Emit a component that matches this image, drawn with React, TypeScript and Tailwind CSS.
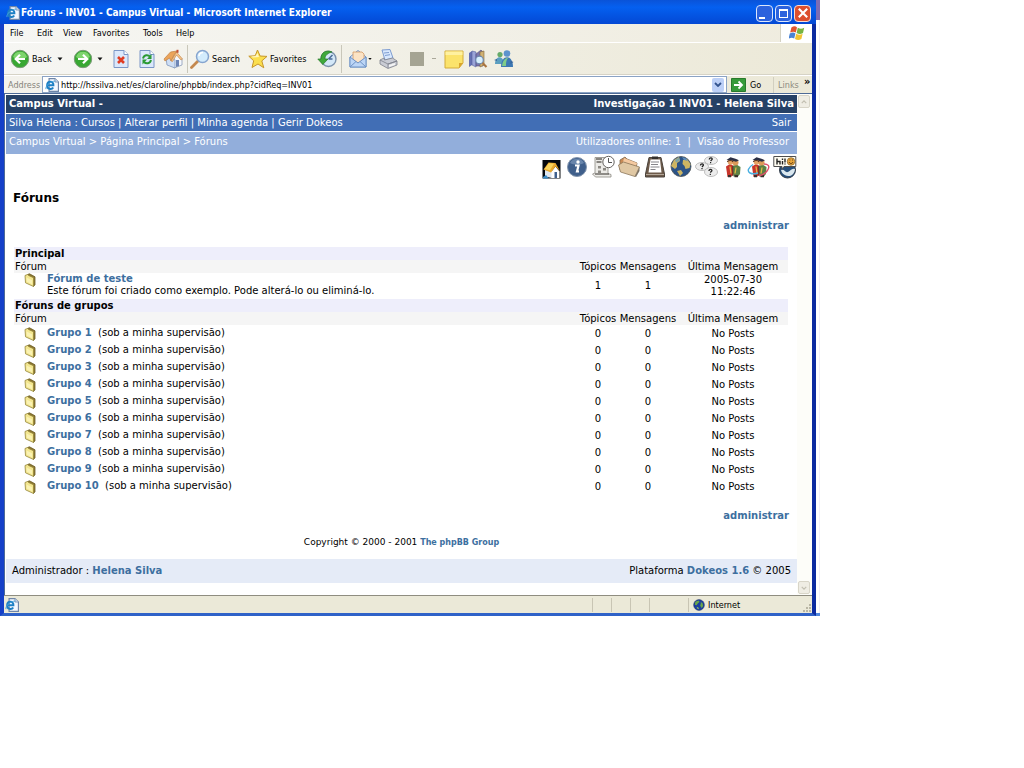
import React from "react";

type P = { children?: React.ReactNode };

const Svg = ({ children, box = "0 0 20 20", cls = "h-5 w-5" }: P & { box?: string; cls?: string }) => (
  <svg viewBox={box} className={`block shrink-0 ${cls}`} aria-hidden="true">
    {children}
  </svg>
);

const PageIcon = ({ cls = "h-3 w-3" }: { cls?: string }) => (
  <Svg box="0 0 12 12" cls={cls}>
    <path d="M3.500 .5h5l3 3v8h-8z" fill="#f4f8ff" stroke="#6f86a8" />
    <path d="M8.500 .5v3h3" fill="#c8d6ea" stroke="#6f86a8" strokeWidth=".6" />
    <path d="M2 6.200h5.200c.3-4-5.200-4-5.400 0-.2 3.600 4 4 5.200 1.900" fill="none" stroke="#1c7fc4" strokeWidth="1.700" />
    <path d="M.8 9.500C0 7 5 2.500 8.800 2.600" fill="none" stroke="#49a4dd" strokeWidth=".8" />
  </Svg>
);

const BackIcon = ({ flip = false }: { flip?: boolean }) => (
  <Svg cls={flip ? "h-5 w-5 -scale-x-100" : "h-5 w-5"}>
    <circle cx="10" cy="10" r="8.700" fill="#38a832" stroke="#7c9a78" />
    <path d="M3 8a7.300 7.300 0 0 1 14 0c-4 3-10 3-14 0" fill="#7ed46d" />
    <path d="M15 10H6m4-4.300L5.700 10l4.300 4.300" fill="none" stroke="#fff" strokeWidth="2.200" />
  </Svg>
);

const Sheet = ({ children }: P) => (
  <Svg box="0 0 16 19" cls="h-5 w-4">
    <path d="M1 1h10l4 4v13H1z" fill="#dbe8fb" stroke="#7b96c6" />
    <path d="M11 1v4h4" fill="#fff" stroke="#7b96c6" />
    {children}
  </Svg>
);

const HomeIcon = () => (
  <Svg>
    <path d="M9 9l5-4 5 5v6l-8 3z" fill="#f4f7fc" stroke="#8a9ab8" strokeWidth=".8" />
    <path d="M3 9l5-4 4 6v8l-8-3z" fill="#cfdff5" stroke="#8097bd" strokeWidth=".8" />
    <path d="M1 10l6.500-7L14 2l-3 4-3 6-1.500-3L2 12z" fill="#eba45a" stroke="#c08040" strokeWidth=".7" />
    <path d="M8 12l5.500-9L19.500 10l-1.500 1-4.500-5-4 6.500z" fill="#f6c58d" stroke="#c08040" strokeWidth=".6" />
    <path d="M13 11h3v6l-3 1z" fill="#6e86b5" />
    <path d="M13.500 .8h2v3h-2z" fill="#c44f30" />
  </Svg>
);

const SearchIcon = () => (
  <Svg>
    <path d="M1.500 18.500L8 12" stroke="#c4884e" strokeWidth="2.800" strokeLinecap="round" />
    <circle cx="12.500" cy="7.500" r="6" fill="#d3ecfc" stroke="#86a5cf" strokeWidth="1.500" />
    <path d="M9 7a4 4 0 0 1 4-3.500" fill="none" stroke="#fff" strokeWidth="1.600" />
  </Svg>
);

const StarIcon = () => (
  <Svg>
    <path d="M9.500 1l2.600 6 6.900.400-5.200 4.500 2 6.900L10 15l-6 3.500 1.700-6.700L.8 7.200l6.400-.4z" fill="#fbdf4e" stroke="#c6962a" />
    <path d="M9.500 4l1.500 4-6 .5-2-1 4.500-.5z" fill="#fff6bd" />
  </Svg>
);

const HistoryIcon = () => (
  <Svg>
    <circle cx="11.500" cy="10" r="7.500" fill="#d4e8f8" stroke="#7c92ac" strokeWidth="1.400" />
    <path d="M11.500 10l4-4m-4 4h4" stroke="#4a6b96" strokeWidth="1.500" fill="none" />
    <path d="M15 3C9 0 3.500 4 4 10H.8l5 5.500L11 10H8C8 6 11 4 15 3z" fill="#3fa93b" stroke="#27792a" strokeWidth=".7" />
  </Svg>
);

const MailIcon = () => (
  <Svg>
    <path d="M2 8l8-6.500L18 8v10H2z" fill="#dceafb" stroke="#6f93c6" />
    <path d="M5 3h9l2 2v6l-6 3-5-3z" fill="#fbe3c5" stroke="#d59b62" strokeWidth=".8" />
    <path d="M2 8l8 6 8-6v10H2z" fill="#bcd6f6" stroke="#6f93c6" />
    <path d="M2 18l6-5.500M18 18l-6-5.500" stroke="#6f93c6" />
  </Svg>
);

const PrintIcon = () => (
  <Svg>
    <path d="M4 1l8-.5L15 9l-8 2z" fill="#d8e8fd" stroke="#7d9cd0" />
    <path d="M6 4l5-.5M7 6.500l5-.8" stroke="#7d9cd0" />
    <path d="M2 11l4-2 .5 2 8-2 4.500 3v4l-9 3.500L2 15z" fill="#c9ccd4" stroke="#7d818c" strokeWidth=".8" />
    <path d="M2 11l8 4 9-3-9 3v4" fill="none" stroke="#7d818c" strokeWidth=".8" />
    <path d="M11 16l6-2v2l-6 2z" fill="#f5f5f5" />
  </Svg>
);

const NoteIcon = () => (
  <Svg>
    <path d="M1 2h18v12l-4 5H1z" fill="#fbe36b" stroke="#d3ac3a" />
    <path d="M1.500 2.500h17V6h-17z" fill="#fff1a0" />
    <path d="M19 14h-4v5z" fill="#d9a52d" />
  </Svg>
);

const ResearchIcon = () => (
  <Svg>
    <path d="M1 4l3-2v14l-3 2z" fill="#6470b2" />
    <path d="M4 2l4 1v15l-4-2z" fill="#9aa4d8" stroke="#545f9d" strokeWidth=".6" />
    <path d="M8 5l5-4 2 2v14H8z" fill="#7c76ab" stroke="#4f4b7c" strokeWidth=".6" />
    <path d="M12 3l4-1v14l-4 2z" fill="#d1b173" stroke="#826438" strokeWidth=".6" />
    <circle cx="11.500" cy="11" r="3.800" fill="#d7effd" stroke="#6b86ae" strokeWidth="1.200" />
    <path d="M14.500 14l4 4" stroke="#a97440" strokeWidth="2.200" />
  </Svg>
);

const MessengerIcon = () => (
  <Svg>
    <circle cx="6" cy="5.500" r="2.600" fill="#66ab6a" />
    <path d="M1 15c0-9 9-9 9 0z" fill="#5a9ec0" />
    <circle cx="13" cy="4.500" r="3.300" fill="#5d93cd" />
    <path d="M7 18c0-13 12-13 12 0z" fill="#3c78b4" />
    <path d="M8 17c1-7 4-8 6-8-2 2-2 5-2 8z" fill="#7fcb88" />
    <path d="M0 11l3-1v2zM19.500 13l-3-1v3z" fill="#36649c" />
  </Svg>
);

const Globe = ({ cls = "h-3 w-3" }: { cls?: string }) => (
  <Svg cls={cls}>
    <circle cx="10" cy="10" r="9" fill="#1c3fa0" stroke="#1c2b58" strokeWidth=".8" />
    <path d="M4 4.500l5-2 2 2-3 3-2 3-3-1zM13 5l3 2 1 5-3 3-2-4 1-3z" fill="#6aa748" />
    <path d="M6 13l3 1 1 3-3-1z" fill="#8fbf5a" />
  </Svg>
);

const FlagIcon = () => (
  <Svg cls="h-4 w-4">
    <path d="M3 3c3-2 5-2 7 0L8.500 9.500c-2-1.500-4-1.500-7 0z" fill="#e2552e" />
    <path d="M11 3.500c3 1.500 5 1.500 8 0L17.500 10c-3 1.500-5 1.500-8 0z" fill="#77b43f" />
    <path d="M1 10.500c3-1.500 5-1.500 7 0L6.500 17c-2-1.500-4-1.500-7 0z" fill="#4a83d4" />
    <path d="M9 11c3 1.500 5 1.500 8 0l-1.500 6.500c-3 1.500-5 1.500-8 0z" fill="#f2c332" />
  </Svg>
);

const Folder = () => (
  <Svg box="0 0 12 14" cls="h-3.5 w-3">
    <path d="M3.500 1.500l2-.7 5.500 3v8l-1.500 1.700z" fill="#8d7731" stroke="#6f6128" strokeWidth=".8" />
    <path d="M1 2.500l2.500-1 1.500 1.200 4.500 2v8.800L1.500 9.800z" fill="#f3e68f" stroke="#94853a" strokeWidth=".8" />
    <path d="M2.500 4.500l5.500 2.700v4L3 8.800z" fill="#faf2b4" />
  </Svg>
);

const Arrow = ({ cls = "h-1 w-1.5" }: { cls?: string }) => (
  <Svg box="0 0 6 4" cls={cls}>
    <path d="M.5 .5h5L3 3.500z" fill="#111" />
  </Svg>
);

const Students = () => (
  <>
    <path d="M5 11.500l4-2.500 4 2v8l-3 3H6.500z" fill="#c8352b" />
    <path d="M11.500 11l4-1.500 4 2.500-.5 7-2 2.500h-4.500z" fill="#5d8044" />
    <circle cx="9.500" cy="7" r="2.800" fill="#e6a668" />
    <circle cx="14.500" cy="7.500" r="3" fill="#dd9959" />
    <path d="M5.500 5l4-2.700 5 1.500 3.500 1.500-3 1.500-5-1.500z" fill="#2b2f44" />
    <path d="M6.500 7c.2-2 5-2 5.500 0" fill="none" stroke="#5b3523" strokeWidth="1.200" />
    <path d="M7 20h3v2.200H7zM13.500 20h3.500v2.200h-3.500z" fill="#38302d" />
    <path d="M9 11.500l1 7M15 12.500l-1 6" stroke="#e2b847" strokeWidth="1.300" fill="none" />
    <path d="M11.800 11v10" stroke="#4b2a22" strokeWidth=".8" />
  </>
);

const tools: { label: string; art: React.ReactNode }[] = [
  {
    label: "Início",
    art: (
      <>
        <path d="M3.500 5h18v18.500h-18z" fill="#05080d" />
        <path d="M6 15l7 1v7l-7-1.500z" fill="#dfe6ef" />
        <path d="M12.500 16.500l4-5 4 5v6.500h-8z" fill="#fff" />
        <path d="M4.500 14.500l5-7 7 .5 4.500 8-4.500-4.500-4.500 6z" fill="#e9a82c" />
        <path d="M5.500 14l4.500-5.700 5 .5-4 6.500z" fill="#f9d35c" />
        <path d="M15.500 17h2.500v6h-2.500z" fill="#40618e" />
        <path d="M4 22l3-2 3 3.500H4z" fill="#3b8cc8" />
      </>
    ),
  },
  {
    label: "Descrição",
    art: (
      <>
        <circle cx="12" cy="12" r="9.500" fill="#3f5f8b" stroke="#8496ae" />
        <path d="M5 8a8 8 0 0 1 14 0c-4 2-10 2-14 0" fill="#6885ab" />
        <circle cx="13" cy="7" r="1.700" fill="#fff" />
        <path d="M10 10.500h3.500l-1.500 6h2" fill="none" stroke="#fff" strokeWidth="2.200" />
      </>
    ),
  },
  {
    label: "Agenda",
    art: (
      <>
        <path d="M4 2.500h13v16l3 1v2.500H4.500L1.500 19l2.500-1z" fill="#ecebe7" stroke="#8b8882" strokeWidth=".8" />
        <path d="M5 4h6M5.500 7h5" stroke="#66635e" strokeWidth="1.600" />
        <path d="M7 11h3v2.500H7zM12 13h3v2.500h-3zM7 15.500h3V18H7z" fill="#8c8983" />
        <path d="M4 19h14" stroke="#66635e" strokeWidth="1.400" />
        <circle cx="17.500" cy="7" r="5.700" fill="#fff" stroke="#65625e" />
        <path d="M17.500 3v4.500H21" fill="none" stroke="#555" />
      </>
    ),
  },
  {
    label: "Documentos",
    art: (
      <>
        <path d="M3 5l5-3 2 2 10 4-2 12L3 15z" fill="#c88a55" stroke="#80694f" strokeWidth=".8" />
        <path d="M7 3l13 5-1 3L6 7z" fill="#f4c9a0" />
        <path d="M1.500 10l5-3 16 5-4.500 9.500L3.500 17z" fill="#e0c8a4" stroke="#8d775b" strokeWidth=".8" />
        <path d="M18 21.500l4.500-9.500v4L19 22z" fill="#7d7264" />
      </>
    ),
  },
  {
    label: "Anúncios",
    art: (
      <>
        <path d="M6 2.500h12l3.500 16.500v3h-19v-3z" fill="#6d5a4a" stroke="#4a433c" />
        <path d="M7.500 4.500h9.500l1.500 13H5.500z" fill="#fff" />
        <path d="M8 7h8M8 9.500h7M7.500 12h9M7.500 14.500h5" stroke="#85858a" />
        <path d="M9 1.500h6v2.500H9z" fill="#34302c" />
        <path d="M3 19.500h18" stroke="#b3a799" />
      </>
    ),
  },
  {
    label: "Ligações",
    art: (
      <>
        <circle cx="12" cy="11.500" r="10" fill="#2b5387" stroke="#464e50" strokeWidth=".8" />
        <path d="M5 5l5-3 1 4-3 2v4l-2 2-4-3zM14 5l4-1 3.500 5-1 4-4 1-1-3-2-2zM8 16l4-1 2 3-3 3z" fill="#cdb562" />
        <path d="M6 5l4-2.500 1 3-4 2z" fill="#7fa3a4" />
        <path d="M13 2a9 9 0 0 1 6 4l-4-1z" fill="#5d8dbd" />
      </>
    ),
  },
  {
    label: "Fóruns",
    art: (
      <>
        <g fill="#ededed" stroke="#b0b0b0" strokeWidth=".8">
          <ellipse cx="16" cy="5.500" rx="6.500" ry="4" />
          <ellipse cx="7" cy="11.500" rx="6.500" ry="4" />
          <ellipse cx="16" cy="17" rx="6.500" ry="4.500" />
        </g>
        <path d="M14.300 4.500c0-2.500 3.500-2 2.800 0l-1.500 1.500M5.500 10.500c0-2.500 3.500-2 2.800 0L7 12M14 16c0-2.500 3.500-2 2.800 0l-1.500 1.500" fill="none" stroke="#222" strokeWidth="1.300" />
        <path d="M15 7h1.200v1.200H15zM6.400 13h1.200v1.200H6.400zM14.700 18.700h1.200v1.200h-1.200z" fill="#222" />
      </>
    ),
  },
  { label: "Utilizadores", art: <Students /> },
  {
    label: "Grupos",
    art: (
      <>
        <Students />
        <path d="M17 9c4 0 6 2 4 5.500-1.500 3-5 5.500-9 6" fill="none" stroke="#df4d69" strokeWidth="1.400" />
        <path d="M6 9.500c-5 3-6 7-3 8.500 2 1 5 1 8 0" fill="none" stroke="#49afe0" strokeWidth="1.400" />
      </>
    ),
  },
  {
    label: "Conversa",
    art: (
      <>
        <circle cx="14.500" cy="15" r="8" fill="#264f7b" stroke="#343d48" />
        <path d="M8 15c4-1 4 3 7 2s3-4 7-3c0 3-2 6-5 7-5 0-8-2-9-6" fill="#dbe8ef" />
        <path d="M.8 1.500h22v10H11l-2 3v-3H.8z" fill="#fffdf2" stroke="#4e4e4e" />
        <path d="M4 3.500v6M4 6.500h3v3M9.500 6v3.500M9.500 3.500V5M12 3.500v4M12 8.500v1" stroke="#222" strokeWidth="1.400" fill="none" />
        <circle cx="18" cy="6.500" r="3.800" fill="#e8a63b" stroke="#805c25" strokeWidth=".7" />
        <path d="M16 7c1 2 3 2 4 0M16.500 5h.8M19 5h.8" fill="none" stroke="#553312" />
      </>
    ),
  },
];

const A = ({ children }: P) => (
  <a href="#" className="font-bold text-[#3d6f9f]">
    {children}
  </a>
);

const Sep = () => <span className="mx-0.5 h-7 w-px shrink-0 bg-[#c9c7ba]" />;

const TBtn = ({ children, cls, label }: P & { cls: string; label?: string }) => (
  <button type="button" aria-label={label} className={`flex shrink-0 items-center gap-0.5 ${cls}`}>
    {children}
  </button>
);

const Section = ({ title, children }: P & { title: string }) => (
  <tbody>
    <tr className="h-[13px] bg-[#eeeefb]">
      <th colSpan={5} className="px-px text-left font-bold">
        {title}
      </th>
    </tr>
    <tr className="h-[13px] bg-[#f5f5f5]">
      <th colSpan={2} className="px-px text-left font-normal">
        Fórum
      </th>
      <th className="font-normal">Tópicos</th>
      <th className="font-normal">Mensagens</th>
      <th className="font-normal">Última Mensagem</th>
    </tr>
    {children}
  </tbody>
);

const groups = [1, 2, 3, 4, 5, 6, 7, 8, 9, 10];

export default function App() {
  return (
    <div className="min-h-screen bg-white">
      <div className="flex w-full max-w-[820px] bg-white text-black">
        <div className="min-w-0 flex-1 border-x-4 border-b-[3px] border-b-[#2f62c8] border-l-[#1540c8] border-r-[#0b2aa0] bg-[#efeee4] font-['DejaVu_Sans_Condensed','Liberation_Sans',sans-serif] text-[9px] leading-3">
          <header className="-mx-1 flex h-6 items-center bg-linear-to-b from-[#0a53d8] via-[#0560f0] via-30% to-[#0448d4] pt-0.5 pr-[5px] pl-1.5">
            <PageIcon cls="h-3.5 w-3.5" />
            <h1 className="ml-px flex-1 truncate text-[10px] font-bold text-white">
              Fóruns - INV01 - Campus Virtual - Microsoft Internet Explorer
            </h1>
            <div className="flex gap-0.5">
              <button type="button" aria-label="Minimizar" className="flex h-[17px] w-[17px] items-end rounded-sm border border-[#dce6fb] bg-[#2c62dd] p-0.5">
                <span className="h-0.5 w-1.5 bg-white" />
              </button>
              <button type="button" aria-label="Maximizar" className="flex h-[17px] w-[17px] items-center justify-center rounded-sm border border-[#dce6fb] bg-[#2c62dd]">
                <span className="h-[9px] w-[9px] border border-t-2 border-white" />
              </button>
              <button type="button" aria-label="Fechar" className="flex h-[17px] w-[17px] items-center justify-center rounded-sm border border-[#f4dcd6] bg-[#dc4f2e]">
                <Svg box="0 0 10 10" cls="h-3 w-3">
                  <path d="M1.500 1.500l7 7m0-7l-7 7" stroke="#fff" strokeWidth="1.800" />
                </Svg>
              </button>
            </div>
          </header>

          <nav className="flex h-[19px] items-center border-b border-white bg-linear-to-r from-[#f6f6f3] to-[#efecdf] pl-1.5">
            <button type="button" className="w-[27px] text-left">File</button>
            <button type="button" className="w-[26px] text-left">Edit</button>
            <button type="button" className="w-[30px] text-left">View</button>
            <button type="button" className="w-[50px] text-left">Favorites</button>
            <button type="button" className="w-[33px] text-left">Tools</button>
            <button type="button" className="text-left">Help</button>
            <span className="ml-auto flex h-full w-8 items-center justify-center border-l border-[#d5d2c4] bg-white">
              <FlagIcon />
            </span>
          </nav>

          <div className="flex h-8 items-center overflow-hidden border-b border-[#d6d3c6] bg-linear-to-r from-[#f6f6f3] to-[#ece9d8] pl-1.5">
            <TBtn cls="w-[47px]"><BackIcon />Back</TBtn>
            <TBtn cls="w-4" label="Lista anterior"><Arrow /></TBtn>
            <TBtn cls="w-6" label="Forward"><BackIcon flip /></TBtn>
            <TBtn cls="w-4" label="Lista seguinte"><Arrow /></TBtn>
            <TBtn cls="w-[26px]" label="Stop">
              <Sheet><path d="M5 7.500l6 6m0-6l-6 6" stroke="#e03c22" strokeWidth="2.600" /></Sheet>
            </TBtn>
            <TBtn cls="w-6" label="Refresh">
              <Sheet>
                <path d="M4 9c1-4 5-4 7-2M12 10.500c-1 4-5 4-7 2" fill="none" stroke="#2b9a34" strokeWidth="2" />
                <path d="M12.500 4.500v5H8zM3.500 15v-5H8z" fill="#2b9a34" />
              </Sheet>
            </TBtn>
            <TBtn cls="w-[22px]" label="Home"><HomeIcon /></TBtn>
            <Sep />
            <TBtn cls="w-[58px]"><SearchIcon />Search</TBtn>
            <TBtn cls="w-[69px]"><StarIcon />Favorites</TBtn>
            <TBtn cls="w-[22px]" label="History"><HistoryIcon /></TBtn>
            <Sep />
            <TBtn cls="ml-1 w-5" label="Mail"><MailIcon /></TBtn>
            <TBtn cls="w-2.5" label="Opções de correio"><Arrow cls="h-1 w-1" /></TBtn>
            <TBtn cls="w-8" label="Print"><PrintIcon /></TBtn>
            <TBtn cls="w-[22px]" label="Edit"><span className="h-3.5 w-3.5 bg-[#a5a493]" /></TBtn>
            <TBtn cls="w-3" label="Editores"><span className="h-px w-1 bg-[#aaa89a]" /></TBtn>
            <TBtn cls="w-6" label="Discuss"><NoteIcon /></TBtn>
            <TBtn cls="w-[26px]" label="Research"><ResearchIcon /></TBtn>
            <TBtn cls="w-6" label="Messenger"><MessengerIcon /></TBtn>
          </div>

          <form className="flex h-[18px] items-center border-t border-white bg-linear-to-r from-[#f3f2ec] to-[#ece9d8] pl-1">
            <label htmlFor="address" className="w-[34px] shrink-0 text-[#85837a]">Address</label>
            <div className="flex h-[17px] min-w-0 flex-1 items-center border border-[#8ba3c4] bg-white px-0.5">
              <PageIcon cls="h-3.5 w-3.5" />
              <input id="address" className="ml-0.5 min-w-0 flex-1 bg-transparent outline-none" defaultValue="http://hssilva.net/es/claroline/phpbb/index.php?cidReq=INV01" />
              <button type="button" aria-label="Endereços" className="flex h-3.5 w-3 items-center justify-center rounded-xs bg-[#bdd0f7]">
                <Svg box="0 0 8 5" cls="h-[5px] w-2"><path d="M1 1l3 3 3-3" fill="none" stroke="#33538e" strokeWidth="1.800" /></Svg>
              </button>
            </div>
            <button type="button" className="ml-1 flex w-[42px] items-center gap-1">
              <Svg box="0 0 15 14" cls="h-3.5 w-[15px]">
                <path d="M.5 .5h14v13H.5z" fill="#369a3a" stroke="#287a2c" />
                <path d="M3 7h8M7.500 3.500L11 7l-3.500 3.500" fill="none" stroke="#fff" strokeWidth="1.800" />
              </Svg>
              Go
            </button>
            <span className="h-4 w-px bg-[#d2cfc0]" />
            <button type="button" className="ml-1 w-[26px] text-left text-[#8d8b80]">Links</button>
            <button type="button" aria-label="Mais" className="-mt-1.5 w-2 text-left text-[11px] font-bold">»</button>
          </form>

          <div className="flex border-t border-l border-[#4d6a96] bg-white">
            <main className="min-w-0 flex-1 border-t border-l border-white font-['DejaVu_Sans',sans-serif] text-[10px] leading-3">
              <div className="flex h-[19px] items-center justify-between border-b border-white bg-[#264166] pr-[3px] pl-[3px] font-bold text-white">
                <span>Campus Virtual -</span>
                <span>Investigação 1 INV01 - Helena Silva</span>
              </div>
              <div className="flex h-[18px] items-center justify-between border-b border-white bg-[#416eb5] pr-1.5 pl-[3px] text-white">
                <p>
                  <a href="#">Silva Helena</a> : <a href="#">Cursos</a> | <a href="#">Alterar perfil</a> | <a href="#">Minha agenda</a> | <a href="#">Gerir Dokeos</a>
                </p>
                <a href="#">Sair</a>
              </div>
              <div className="flex h-[22px] items-center justify-between bg-[#92aedb] pr-2 pb-0.5 pl-[3px] text-white">
                <p>
                  <a href="#">Campus Virtual</a> &gt; <a href="#">Página Principal</a> &gt; <a href="#">Fóruns</a>
                </p>
                <p>
                  Utilizadores online: 1 &nbsp;| &nbsp;<a href="#">Visão do Professor</a>
                </p>
              </div>

              <div className="flex justify-end gap-0.5 pt-px pb-px">
                {tools.map((t) => (
                  <a key={t.label} href="#" aria-label={t.label}>
                    <Svg box="0 0 24 24" cls="h-6 w-6">{t.art}</Svg>
                  </a>
                ))}
              </div>

              <h2 className="mt-2.5 pl-[7px] text-xs leading-4 font-bold">Fóruns</h2>
              <p className="mt-3.5 pr-2 text-right"><A>administrar</A></p>

              <div className="mt-[15px] pr-[9px] pl-2">
                <table className="w-full table-fixed border-separate border-spacing-0 [&_td]:p-0 [&_th]:py-0">
                  <colgroup>
                    <col className="w-[33px]" />
                    <col />
                    <col className="w-10" />
                    <col className="w-[60px]" />
                    <col className="w-[110px]" />
                  </colgroup>
                  <Section title="Principal">
                    <tr className="h-[26px]">
                      <td className="pl-2.5! align-top"><Folder /></td>
                      <td className="align-top">
                        <A>Fórum de teste</A>
                        <br />
                        Este fórum foi criado como exemplo. Pode alterá-lo ou eliminá-lo.
                      </td>
                      <td className="text-center">1</td>
                      <td className="text-center">1</td>
                      <td className="text-center">2005-07-30<br />11:22:46</td>
                    </tr>
                  </Section>
                  <Section title="Fóruns de grupos">
                    {groups.map((n) => (
                      <tr key={n} className="h-[17px]">
                        <td className="pl-2.5!"><Folder /></td>
                        <td className="pb-0.5!"><A>Grupo {n}</A>&nbsp; (sob a minha supervisão)</td>
                        <td className="text-center">0</td>
                        <td className="text-center">0</td>
                        <td className="text-center">No Posts</td>
                      </tr>
                    ))}
                  </Section>
                </table>
              </div>

              <p className="mt-[15px] pr-2 text-right"><A>administrar</A></p>
              <p className="mt-3.5 text-center text-[9px]">
                Copyright © 2000 - 2001 <span className="text-[8px]"><A>The phpBB Group</A></span>
              </p>
              <footer className="mt-2.5 mb-3 flex h-6 items-center justify-between bg-[#e5ebf7] px-1.5">
                <p>Administrador : <A>Helena Silva</A></p>
                <p>Plataforma <A>Dokeos 1.6</A> © 2005</p>
              </footer>
            </main>
            <div className="flex w-[15px] shrink-0 flex-col justify-between bg-[#fdfdf9] p-px">
              <button type="button" aria-label="Subir" className="flex h-[13px] w-3 items-center justify-center rounded-xs border border-[#d8d5c8] bg-[#efede4]">
                <Svg box="0 0 8 5" cls="h-1 w-1.5"><path d="M1 4l3-3 3 3" fill="none" stroke="#c2bfb2" strokeWidth="1.600" /></Svg>
              </button>
              <button type="button" aria-label="Descer" className="flex h-[13px] w-3 items-center justify-center rounded-xs border border-[#d8d5c8] bg-[#efede4]">
                <Svg box="0 0 8 5" cls="h-1 w-1.5"><path d="M1 1l3 3 3-3" fill="none" stroke="#c2bfb2" strokeWidth="1.600" /></Svg>
              </button>
            </div>
          </div>

          <div className="flex h-[18px] items-center border-t border-[#8f8d80] bg-[#ebe9d8] pl-px">
            <PageIcon cls="h-3.5 w-3.5" />
            <div className="ml-auto flex h-3.5 [&>span]:border-l [&>span]:border-[#c8c5b4]">
              <span className="w-[19px]" />
              <span className="w-[19px]" />
              <span className="w-[19px]" />
              <span className="w-[39px]" />
              <span className="flex w-[114px] items-center gap-[3px] pl-1"><Globe />Internet</span>
            </div>
            <Svg box="0 0 10 10" cls="mt-1.5 h-2.5 w-2.5">
              <path d="M7 1h2v2H7zM7 4h2v2H7zM4 4h2v2H4zM7 7h2v2H7zM4 7h2v2H4zM1 7h2v2H1z" fill="#b9b6a4" />
            </Svg>
          </div>
        </div>
        <div className="flex w-1 shrink-0 flex-col">
          <span className="h-5 bg-[#7d6cb4]" />
          <span className="flex-1 border-r border-[#f0eefa]" />
          <span className="h-[3px] bg-[#4f86dc]" />
        </div>
      </div>
    </div>
  );
}
